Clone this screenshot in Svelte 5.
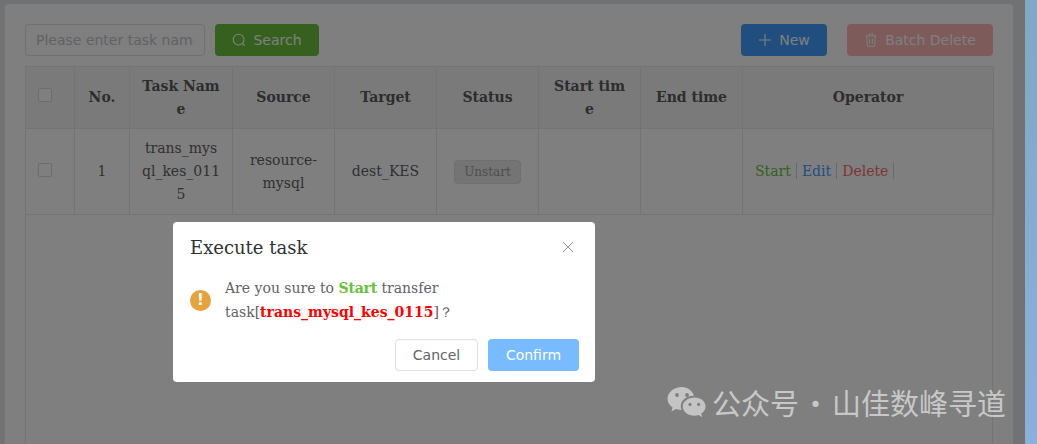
<script>
    // table columns, widths taken from the page
    const columns = [
        { title: "No.", width: 55 },
        { title: "Task Name", width: 103 },
        { title: "Source", width: 102 },
        { title: "Target", width: 102 },
        { title: "Status", width: 102 },
        { title: "Start time", width: 102 },
        { title: "End time", width: 102 },
        { title: "Operator", width: 251 },
    ];
</script>

<div class="desktop">
    <div class="backdrop">
        <div class="card">
            <div class="toolbar">
                <input class="search-input" placeholder="Please enter task name" />
                <button class="btn green">
                    <svg width="14" height="14" viewBox="0 0 14 14" fill="none" stroke="currentColor" stroke-width="1.1">
                        <circle cx="6.6" cy="6.6" r="5.4" />
                        <path d="M10.5 10.5 L12.8 12.8" />
                    </svg>
                    Search
                </button>
                <span class="spacer"></span>
                <button class="btn blue">
                    <svg width="14" height="14" viewBox="0 0 14 14" fill="none" stroke="currentColor" stroke-width="1.1">
                        <path d="M7 1 V13 M1 7 H13" />
                    </svg>
                    New
                </button>
                <button class="btn red">
                    <svg width="14" height="14" viewBox="0 0 14 14" fill="none" stroke="currentColor" stroke-width="1">
                        <path d="M1.5 3 H12.5 M5 3 V1 H9 V3 M2.8 3 L3.3 13.2 H10.7 L11.2 3 M5.6 5.5 V10.8 M8.4 5.5 V10.8" />
                    </svg>
                    Batch Delete
                </button>
            </div>

            <div class="table-wrap">
                <table>
                    <colgroup>
                        <col style="width: 49px" />
                        {#each columns as col}
                            <col style="width: {col.width}px" />
                        {/each}
                    </colgroup>
                    <thead>
                        <tr>
                            <th class="select"><span class="check"></span></th>
                            {#each columns as col}
                                <th><div class="cell">{col.title}</div></th>
                            {/each}
                        </tr>
                    </thead>
                    <tbody>
                        <tr>
                            <td class="select"><span class="check"></span></td>
                            <td><div class="cell">1</div></td>
                            <td><div class="cell task-name">trans_mysql_kes_0115</div></td>
                            <td><div class="cell">resource-mysql</div></td>
                            <td><div class="cell">dest_KES</div></td>
                            <td><div class="cell"><span class="tag">Unstart</span></div></td>
                            <td></td>
                            <td></td>
                            <td class="ops">
                                <span class="op op-green">Start</span><span class="op op-blue">Edit</span><span class="op op-red">Delete</span>
                            </td>
                        </tr>
                    </tbody>
                </table>
            </div>
        </div>
    </div>

    <div class="strip"></div>
    <div class="mask"></div>

    <div class="dialog">
        <div class="dialog-head">
            <span class="dialog-title">Execute task</span>
            <svg class="close" width="12" height="12" viewBox="0 0 12 12" stroke="#909399" stroke-width="1">
                <path d="M1 1 L11 11 M11 1 L1 11" />
            </svg>
        </div>
        <div class="dialog-body">
            <span class="warn">!</span>
            <p>Are you sure to <b class="ok">Start</b> transfer task[<b class="name">trans_mysql_kes_0115</b>]？</p>
        </div>
        <div class="dialog-foot">
            <button class="btn plain">Cancel</button>
            <button class="btn confirm">Confirm</button>
        </div>
    </div>

    <div class="watermark">
        <svg width="39" height="32" viewBox="0 0 39 32" fill="#c4c4c4">
            <path d="M15 1 C7 1 0.5 6.2 0.5 12.8 C0.5 16.4 2.5 19.4 5.6 21.6 L4.4 25.4 L9 23 C10.8 23.6 12.6 23.9 14.6 24 C14 22.6 13.8 21.4 13.8 20.2 C13.8 14 19.8 9.6 27 9.8 C25.4 4.8 20.6 1 15 1 Z" />
            <path d="M27.4 11.4 C20.9 11.4 15.7 15.5 15.7 20.6 C15.7 25.7 20.9 29.8 27.4 29.8 C28.9 29.8 30.3 29.6 31.6 29.1 L35.2 31.2 L34.2 27.8 C36.8 26.1 38.6 23.5 38.6 20.6 C38.6 15.5 33.9 11.4 27.4 11.4 Z" />
            <circle cx="10" cy="9" r="1.9" fill="#7f7f7f" />
            <circle cx="20" cy="9" r="1.9" fill="#7f7f7f" />
            <circle cx="23" cy="18.4" r="1.6" fill="#7f7f7f" />
            <circle cx="31.6" cy="18.4" r="1.6" fill="#7f7f7f" />
        </svg>
        <span>公众号 · 山佳数峰寻道</span>
    </div>
</div>

<style>
    :global(body) {
        margin: 0;
        overflow: hidden;
    }

    .desktop {
        position: relative;
        display: flex;
        width: 1037px;
        height: 444px;
        overflow: hidden;
        font-family: "DejaVu Serif", serif;
        font-size: 14px;
        color: #606266;
    }

    .backdrop {
        width: 1025px;
        height: 444px;
        padding: 4px 12px 0 5px;
        box-sizing: border-box;
        background: #e2e4e8;
    }

    .card {
        height: 100%;
        padding: 20px;
        box-sizing: border-box;
        background: #fff;
        border-radius: 4px 4px 0 0;
    }

    .toolbar {
        display: flex;
        gap: 10px;
        height: 32px;
        margin-bottom: 10px;
    }

    .spacer {
        flex: 1;
    }

    .search-input {
        width: 180px;
        height: 32px;
        padding: 0 10px;
        box-sizing: border-box;
        border: 1px solid #dcdfe6;
        border-radius: 4px;
        font-family: "DejaVu Sans", sans-serif;
        font-size: 14px;
    }

    .search-input::placeholder {
        color: #c0c4cc;
    }

    .btn {
        display: inline-flex;
        align-items: center;
        justify-content: center;
        gap: 7px;
        height: 32px;
        padding: 0;
        border: 1px solid transparent;
        border-radius: 4px;
        font-family: "DejaVu Sans", sans-serif;
        font-size: 14px;
        color: #fff;
    }

    .green {
        width: 104px;
        background: #6bc13a;
    }

    .blue {
        width: 86px;
        margin-right: 10px;
        background: #409eff;
    }

    .red {
        width: 146px;
        background: #fab6b6;
        color: #fff;
    }

    .table-wrap {
        height: 400px;
        width: 968px;
        border-left: 1px solid #e8e8ee;
        border-right: 1px solid #e8e8ee;
        box-sizing: border-box;
    }

    table {
        width: 968px;
        margin-left: -1px;
        table-layout: fixed;
        border-collapse: collapse;
    }

    th,
    td {
        padding: 0;
        border: 1px solid #e8e8ee;
        text-align: center;
        line-height: 23px;
        font-weight: normal;
    }

    th {
        height: 61px;
        background: #f4f4f6;
        font-weight: bold;
        color: #5a5a5a;
        font-size: 14px;
    }

    td {
        height: 85px;
        font-size: 14px;
    }

    .cell {
        padding: 0 12px;
        word-break: break-all;
    }

    .task-name {
        padding: 0 11px;
    }

    th.select,
    td.select {
        text-align: left;
        padding-left: 12px;
    }

    .check {
        display: inline-block;
        width: 14px;
        height: 14px;
        box-sizing: border-box;
        border: 1px solid #dadada;
        border-radius: 2px;
        background: #fff;
        vertical-align: middle;
        margin-top: -6px;
    }

    td.select .check {
        margin-top: -4px;
    }

    .tag {
        display: inline-block;
        padding: 0 9px;
        height: 24px;
        line-height: 22px;
        box-sizing: border-box;
        border: 1px solid #dedede;
        border-radius: 4px;
        background: #e8e8e8;
        color: #9e9e9e;
        font-size: 12px;
    }

    td.ops {
        text-align: left;
        padding-left: 12px;
        white-space: nowrap;
    }

    .op {
        padding-right: 5px;
        margin-right: 5px;
        border-right: 1px solid #d0d3d8;
    }

    .op-green {
        color: #67c23a;
    }

    .op-blue {
        color: #409eff;
    }

    .op-red {
        color: #f56c6c;
    }

    .strip {
        width: 12px;
        height: 444px;
        background: linear-gradient(#7fa9c4, #8ab0dc);
        position: relative;
        z-index: 2;
    }

    .mask {
        position: absolute;
        inset: 0;
        background: rgba(0, 0, 0, 0.5);
    }

    .dialog {
        position: absolute;
        left: 173px;
        top: 222px;
        width: 422px;
        height: 160px;
        box-sizing: border-box;
        background: #fff;
        border-radius: 4px;
        display: flex;
        flex-direction: column;
    }

    .dialog-head {
        display: flex;
        justify-content: space-between;
        align-items: center;
        padding: 14px 21px 0 17px;
        height: 22px;
    }

    .dialog-title {
        font-size: 18px;
        color: #303133;
    }

    .dialog-body {
        display: flex;
        align-items: center;
        gap: 14px;
        padding: 15px 15px 0 17px;
        margin-top: 3px;
    }

    .dialog-body p {
        margin: 0;
        line-height: 24px;
        color: #606266;
        font-size: 14px;
    }

    .warn {
        flex: none;
        width: 21px;
        height: 21px;
        border-radius: 50%;
        background: #e6a23c;
        color: #fff;
        text-align: center;
        font: bold 15px/21px "DejaVu Sans", sans-serif;
    }

    .ok {
        color: #67c23a;
        letter-spacing: -0.2px;
    }

    .name {
        color: #ff0000;
    }

    .dialog-foot {
        display: flex;
        justify-content: flex-end;
        gap: 10px;
        padding: 15px 16px 0;
    }

    .plain {
        width: 83px;
        background: #fff;
        border-color: #dcdfe6;
        color: #606266;
    }

    .confirm {
        width: 91px;
        background: #79bbff;
    }

    .watermark {
        position: absolute;
        left: 667px;
        top: 386px;
        z-index: 3;
        display: flex;
        align-items: center;
        gap: 6px;
        font-family: "Noto Sans CJK SC", sans-serif;
        font-size: 29px;
        word-spacing: -4.5px;
        line-height: 32px;
        color: #c8c8c8;
        white-space: nowrap;
    }
</style>
